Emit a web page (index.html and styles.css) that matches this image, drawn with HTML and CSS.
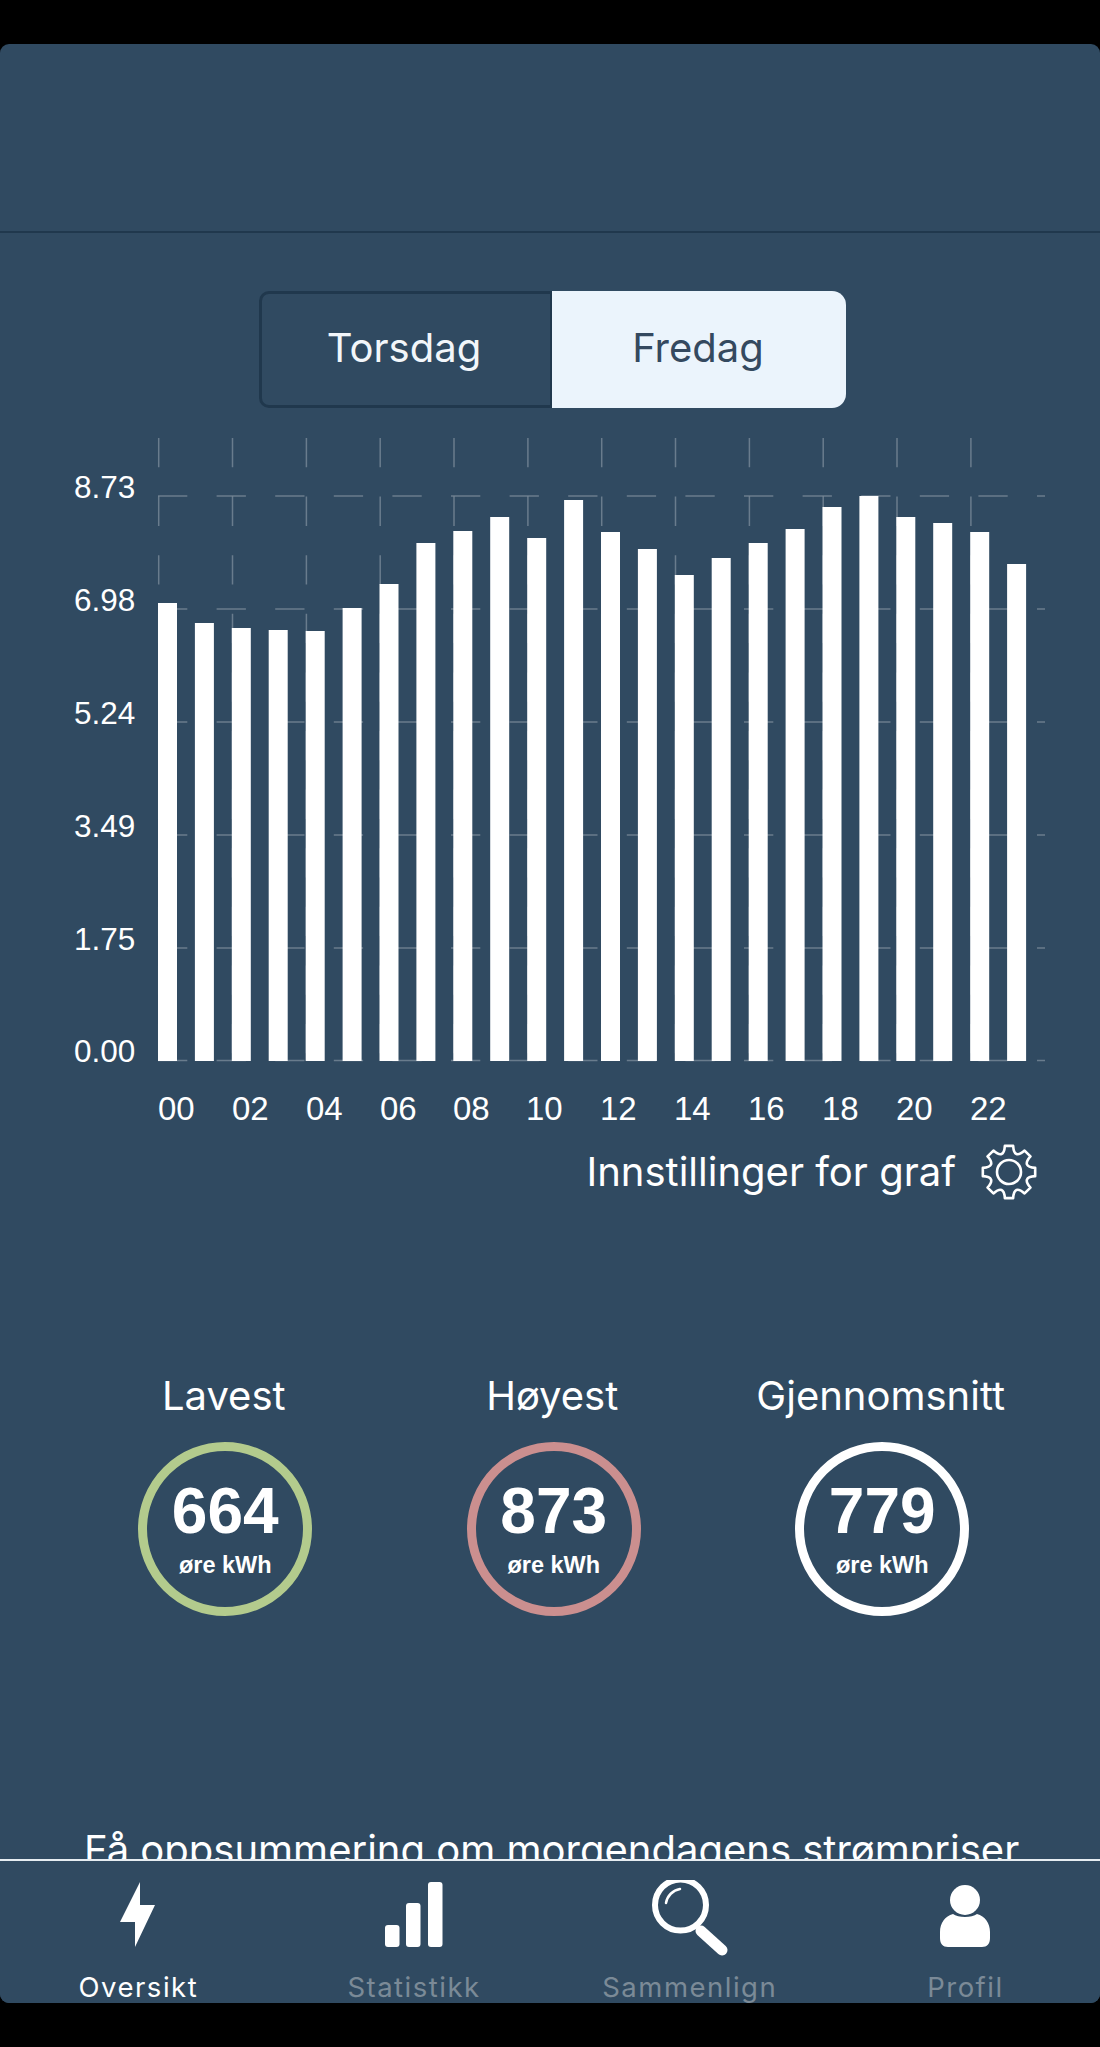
FILE: index.html
```html
<!DOCTYPE html>
<html lang="no">
<head>
<meta charset="utf-8">
<title>Oversikt</title>
<link rel="stylesheet" href="styles.css">
</head>
<body>
<div class="panel">
  <header class="topbar"></header>
  <main class="content">
    <div class="segment">
      <button class="seg seg-off">Torsdag</button>
      <button class="seg seg-on">Fredag</button>
    </div>
    <svg class="chart" width="1100" height="732" viewBox="0 408 1100 732" aria-label="Graf">
      <g class="grid">
        <path d="M158 496H1045M158 609H1045M158 722H1045M158 835H1045M158 948H1045M158 1060.5H1045"/>
        <path d="M158.7 438V1060M232.5 438V1060M306.4 438V1060M380.2 438V1060M454 438V1060M527.9 438V1060M601.7 438V1060M675.5 438V1060M749.4 438V1060M823.2 438V1060M897 438V1060M970.9 438V1060"/>
      </g>
      <g class="bars">
        <rect x="158" y="603" width="19" height="458"/>
        <rect x="194.9" y="623" width="19" height="438"/>
        <rect x="231.8" y="628" width="19" height="433"/>
        <rect x="268.7" y="630" width="19" height="431"/>
        <rect x="305.7" y="631" width="19" height="430"/>
        <rect x="342.6" y="608" width="19" height="453"/>
        <rect x="379.5" y="584" width="19" height="477"/>
        <rect x="416.4" y="543" width="19" height="518"/>
        <rect x="453.3" y="531" width="19" height="530"/>
        <rect x="490.2" y="517" width="19" height="544"/>
        <rect x="527.2" y="538" width="19" height="523"/>
        <rect x="564.1" y="500" width="19" height="561"/>
        <rect x="601" y="532" width="19" height="529"/>
        <rect x="637.9" y="549" width="19" height="512"/>
        <rect x="674.8" y="575" width="19" height="486"/>
        <rect x="711.7" y="558" width="19" height="503"/>
        <rect x="748.7" y="543" width="19" height="518"/>
        <rect x="785.6" y="529" width="19" height="532"/>
        <rect x="822.5" y="507" width="19" height="554"/>
        <rect x="859.4" y="496" width="19" height="565"/>
        <rect x="896.3" y="517" width="19" height="544"/>
        <rect x="933.2" y="523" width="19" height="538"/>
        <rect x="970.2" y="532" width="19" height="529"/>
        <rect x="1007.1" y="564" width="19" height="497"/>
      </g>
      <g class="axis">
        <text x="74" y="498">8.73</text>
        <text x="74" y="611">6.98</text>
        <text x="74" y="724">5.24</text>
        <text x="74" y="837">3.49</text>
        <text x="74" y="950">1.75</text>
        <text x="74" y="1062">0.00</text>
      </g>
      <g class="axis axis-x">
        <text x="158" y="1120">00</text>
        <text x="232" y="1120">02</text>
        <text x="306" y="1120">04</text>
        <text x="380" y="1120">06</text>
        <text x="453" y="1120">08</text>
        <text x="526" y="1120">10</text>
        <text x="600" y="1120">12</text>
        <text x="674" y="1120">14</text>
        <text x="748" y="1120">16</text>
        <text x="822" y="1120">18</text>
        <text x="896" y="1120">20</text>
        <text x="970" y="1120">22</text>
      </g>
    </svg>
    <div class="settings">
      <span>Innstillinger for graf</span>
      <svg class="gear" width="56" height="56" viewBox="-28 -28 56 56" aria-hidden="true">
        <path d="M-4.15 -26.17L4.15 -26.17Q5.05 -12.2 15.57 -21.44L21.44 -15.57Q12.2 -5.05 26.17 -4.15L26.17 4.15Q12.2 5.05 21.44 15.57L15.57 21.44Q5.05 12.2 4.15 26.17L-4.15 26.17Q-5.05 12.2 -15.57 21.44L-21.44 15.57Q-12.2 5.05 -26.17 4.15L-26.17 -4.15Q-12.2 -5.05 -21.44 -15.57L-15.57 -21.44Q-5.05 -12.2 -4.15 -26.17Z"/>
        <circle r="12"/>
      </svg>
    </div>
    <section class="stats">
      <div class="stat">
        <h2>Lavest</h2>
        <div class="ring ring-low"><b>664</b><small>øre kWh</small></div>
      </div>
      <div class="stat">
        <h2>Høyest</h2>
        <div class="ring ring-high"><b>873</b><small>øre kWh</small></div>
      </div>
      <div class="stat">
        <h2>Gjennomsnitt</h2>
        <div class="ring ring-avg"><b>779</b><small>øre kWh</small></div>
      </div>
    </section>
    <p class="promo">Få oppsummering om morgendagens strømpriser</p>
  </main>
  <nav class="tabs">
    <a class="tab tab-on">
      <svg width="80" height="80" viewBox="0 0 80 80" aria-hidden="true"><path d="M42 2V25H57L37 67V42H22Z"/></svg>
      <span>Oversikt</span>
    </a>
    <a class="tab">
      <svg width="80" height="80" viewBox="0 0 80 80" aria-hidden="true"><rect x="11" y="45" width="14.5" height="22" rx="3"/><rect x="32" y="23" width="14.5" height="44" rx="3"/><rect x="54" y="2" width="14.5" height="65" rx="3"/></svg>
      <span>Statistikk</span>
    </a>
    <a class="tab">
      <svg width="80" height="80" viewBox="0 0 80 80" aria-hidden="true"><circle cx="31.5" cy="25" r="25.5" class="lens"/><path d="M17 23A17 17 0 0 1 31 9" class="glint"/><path d="M52 51L73 70" class="handle"/></svg>
      <span>Sammenlign</span>
    </a>
    <a class="tab">
      <svg width="80" height="80" viewBox="0 0 80 80" aria-hidden="true"><circle cx="40" cy="20" r="15"/><path d="M28 34C33 38 47 38 52 34C60 36 65 43 65 52V58C65 64 62 67 57 67H23C18 67 15 64 15 58V52C15 43 20 36 28 34Z"/></svg>
      <span>Profil</span>
    </a>
  </nav>
</div>
</body>
</html>
```
FILE: styles.css
```css
* { box-sizing: border-box; }
html, body { margin: 0; padding: 0; background: #000; }
body { height: 2047px; padding-top: 44px; font-family: Inter, "Noto Sans", sans-serif; color: #fff; overflow: hidden; }

.panel { height: 1959px; background: #304a61; border-radius: 9px; display: flex; flex-direction: column; overflow: hidden; }
.topbar { height: 189px; flex: none; border-bottom: 2px solid #20384d; }
.content { flex: 1; min-height: 0; overflow: hidden; padding-top: 58px; }

.segment { width: 587px; height: 117px; margin-left: 259px; display: flex; }
.seg { font: 400 40px Inter, sans-serif; border: 0; padding: 0 0 4px; height: 100%; }
.seg-off { width: 293px; padding-right: 4px; background: transparent; color: #f2f6fa; border: 3px solid #20384d; border-right-width: 2px; border-radius: 10px 0 0 10px; }
.seg-on { width: 294px; padding-right: 2px; background: #ebf4fc; color: #34495f; border-radius: 0 14px 14px 0; }

.chart { display: block; }
.grid path { fill: none; stroke: #fff; stroke-opacity: 0.28; stroke-width: 1.5; stroke-dasharray: 29.3 29.3; }
.bars rect { fill: #fff; }
.axis text { font: 400 31.5px "Liberation Sans", Arial, sans-serif; fill: #fff; }
.axis-x text { font-size: 33px; }

.settings { display: flex; justify-content: flex-end; align-items: center; gap: 25px; padding-right: 63px; margin-top: 4px; height: 56px; font-size: 40px; line-height: 56px; }
.settings span { margin-bottom: 1px; }
.gear { flex: none; fill: none; stroke: #fff; stroke-width: 2.6; stroke-linejoin: round; }

.stats { display: flex; margin-top: 173px; }
.stat { display: flex; flex-direction: column; align-items: center; width: 328.5px; }
.stat:first-child { margin-left: 61px; }
.stat h2 { margin: 0; padding-right: 3px; font-weight: 400; font-size: 40px; line-height: 46px; white-space: nowrap; }
.ring { width: 174px; height: 174px; margin-top: 23px; border-radius: 50%; border: 9px solid #fff; display: flex; flex-direction: column; align-items: center; font-family: "Liberation Sans", Arial, sans-serif; }
.ring-low { border-color: #b3cb8d; }
.ring-high { border-color: #cb8f8f; }
.ring-avg { border-color: #fff; }
.ring b { font-size: 64px; line-height: 70px; margin-top: 25px; }
.ring small { font-size: 23.5px; font-weight: 700; line-height: 28px; margin-top: 5px; }

.promo { margin: 211px 0 0 84px; font-size: 40px; line-height: 46px; white-space: nowrap; }

.tabs { height: 144px; flex: none; background: #304a61; border-top: 2px solid #e6ecf1; display: grid; grid-template-columns: repeat(4, 275.7px); }
.tab { display: flex; flex-direction: column; align-items: center; color: #7b8a97; font-size: 27.5px; letter-spacing: 1.5px; line-height: 34px; padding-top: 19px; }
.tab svg { fill: #fff; flex: none; }
.tab span { margin-top: 10px; padding-left: 1px; }
.tab-on { color: #fff; }
.lens { fill: none; stroke: #fff; stroke-width: 6; }
.glint { fill: none; stroke: #fff; stroke-width: 2.5; stroke-linecap: round; }
.handle { fill: none; stroke: #fff; stroke-width: 11; stroke-linecap: round; }
```
